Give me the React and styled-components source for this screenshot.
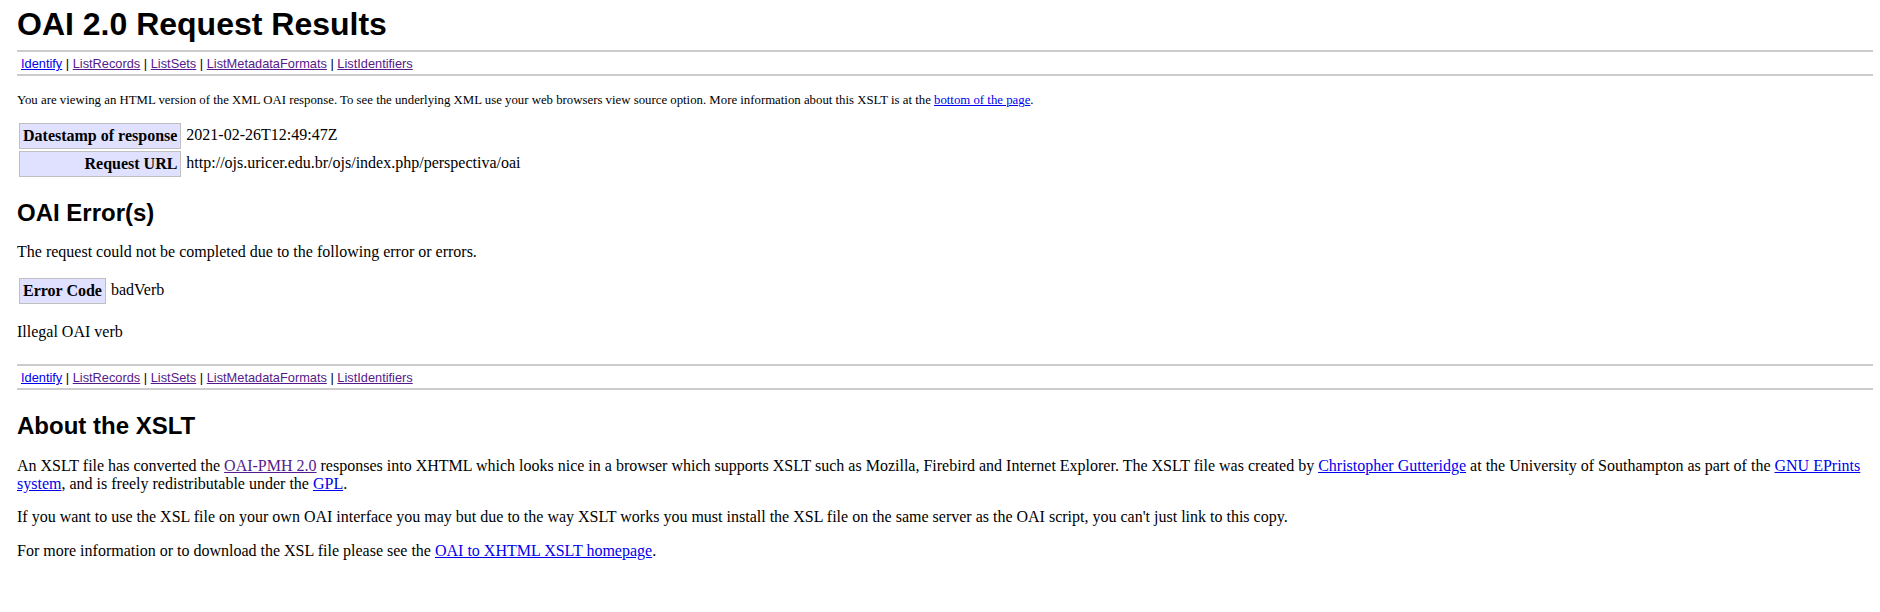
import React from 'react';
import styled, { createGlobalStyle } from 'styled-components';

const GlobalStyle = createGlobalStyle`
  body {
    margin: 0;
    background: #fff;
    color: #000;
    font-family: "Liberation Serif", "Times New Roman", serif;
    font-size: 16px;
  }
`;

const Page = styled.div`
  padding: 0 7px 40px 17px;
`;

const Title = styled.h1`
  font-family: "Liberation Sans", Arial, sans-serif;
  font-size: 32px;
  font-weight: bold;
  margin: 6px 0 0;
`;

const SectionTitle = styled.h2`
  font-family: "Liberation Sans", Arial, sans-serif;
  font-size: 24px;
  font-weight: bold;
  margin: ${(p) => p.$top || 20}px 0 12px;
`;

const Quicklinks = styled.ul`
  margin: ${(p) => p.$top}px 0 0;
  padding: 2px 4px;
  list-style: none;
  text-align: left;
  border-top: 2px solid #ccc;
  border-bottom: 2px solid #ccc;
`;

const QuickItem = styled.li`
  display: inline;
  font-size: 80%;
  font-family: "Liberation Sans", Arial, sans-serif;
`;

const Link = styled.a`
  color: ${(p) => (p.$visited ? '#551a8b' : '#0000ee')};
  text-decoration: underline;
`;

const Intro = styled.p`
  font-size: 80%;
  margin: 17px 0 0;
`;

const Text = styled.p`
  line-height: 18px;
  margin: ${(p) => (p.$top != null ? `${p.$top}px 0 0` : '16px 0 0')};
`;

const KeyTable = styled.table`
  border-spacing: 2px;
  margin-top: ${(p) => p.$top}px;
`;

const KeyCell = styled.td`
  background-color: #e0e0ff;
  padding: 3px;
  text-align: right;
  border: 1px solid #c0c0c0;
  white-space: nowrap;
  font-weight: bold;
  vertical-align: top;
`;

const ValueCell = styled.td`
  vertical-align: top;
  padding: 3px;
`;

const verbs = [
  { name: 'Identify', visited: false },
  { name: 'ListRecords', visited: true },
  { name: 'ListSets', visited: true },
  { name: 'ListMetadataFormats', visited: true },
  { name: 'ListIdentifiers', visited: true },
];

const QuickLinkBar = ({ top }) => (
  <Quicklinks $top={top}>
    {verbs.map((v, i) => (
      <QuickItem key={v.name}>
        <Link href={`?verb=${v.name}`} $visited={v.visited}>{v.name}</Link>
        {i < verbs.length - 1 ? ' | ' : ''}
      </QuickItem>
    ))}
  </Quicklinks>
);

const App = () => {
  return (
    <>
      <GlobalStyle />
      <Page>
        <Title>OAI 2.0 Request Results</Title>
        <QuickLinkBar top={7} />
        <Intro>
          You are viewing an HTML version of the XML OAI response. To see the underlying XML use your web browsers view source option. More information about this XSLT is at the <Link href="#moreinfo">bottom of the page</Link>.
        </Intro>
        <KeyTable $top={13}>
          <tbody>
            <tr>
              <KeyCell>Datestamp of response</KeyCell>
              <ValueCell>2021-02-26T12:49:47Z</ValueCell>
            </tr>
            <tr>
              <KeyCell>Request URL</KeyCell>
              <ValueCell>http://ojs.uricer.edu.br/ojs/index.php/perspectiva/oai</ValueCell>
            </tr>
          </tbody>
        </KeyTable>

        <SectionTitle>OAI Error(s)</SectionTitle>
        <Text>The request could not be completed due to the following error or errors.</Text>
        <KeyTable $top={15}>
          <tbody>
            <tr>
              <KeyCell>Error Code</KeyCell>
              <ValueCell>badVerb</ValueCell>
            </tr>
          </tbody>
        </KeyTable>
        <Text $top={17}>Illegal OAI verb</Text>

        <QuickLinkBar top={23} />

        <SectionTitle id="moreinfo" $top={22}>About the XSLT</SectionTitle>
        <Text $top={17}>
          An XSLT file has converted the <Link href="#" $visited>OAI-PMH 2.0</Link> responses into XHTML which looks nice in a browser which supports XSLT such as Mozilla, Firebird and Internet Explorer. The XSLT file was created by <Link href="#">Christopher Gutteridge</Link> at the University of Southampton as part of the <Link href="#">GNU EPrints system</Link>, and is freely redistributable under the <Link href="#">GPL</Link>.
        </Text>
        <Text $top={15}>If you want to use the XSL file on your own OAI interface you may but due to the way XSLT works you must install the XSL file on the same server as the OAI script, you can't just link to this copy.</Text>
        <Text>For more information or to download the XSL file please see the <Link href="#">OAI to XHTML XSLT homepage</Link>.</Text>
      </Page>
    </>
  );
};

export default App;
